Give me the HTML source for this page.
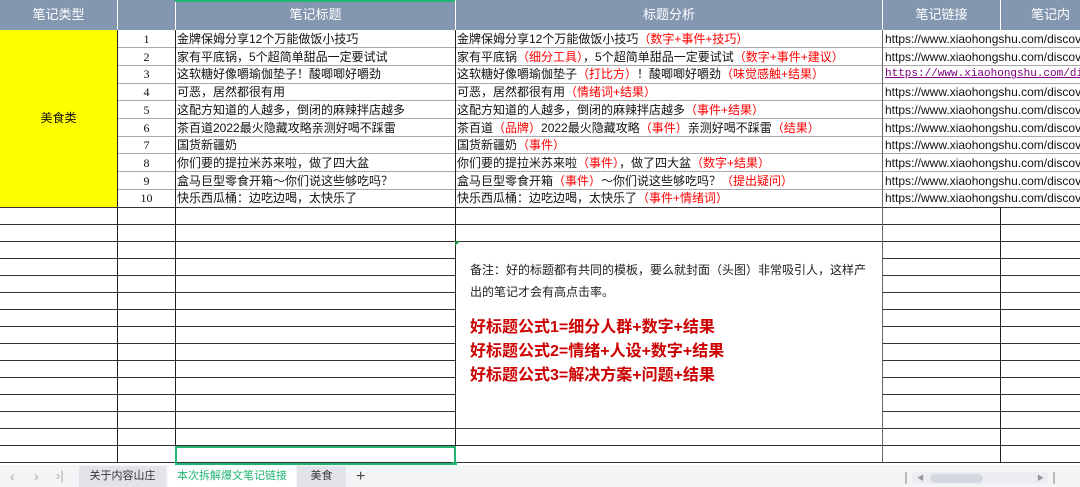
<!DOCTYPE html>
<html><head><meta charset="utf-8"><style>
*{margin:0;padding:0;box-sizing:border-box}
body{width:1080px;height:487px;overflow:hidden;background:#fff;font-family:"Liberation Sans","Noto Sans CJK SC",sans-serif;position:relative;font-size:12px;color:#111}
.a{position:absolute}
.h{position:absolute;background:#8497b0;color:#fff;font-size:13px;text-align:center;line-height:30px;top:0;height:30px}
.r{color:#f00}
.row{position:absolute;left:0;width:1080px;height:17.7px;line-height:18px;white-space:nowrap}
.row .n{position:absolute;left:118px;width:57px;text-align:center;font-family:"Liberation Serif",serif;font-size:12px}
.row .t{position:absolute;left:177px;width:277px;overflow:hidden}
.row .s{position:absolute;left:457px;width:424px;overflow:hidden}
.row .l{position:absolute;left:885px;width:195px;overflow:hidden;font-size:12px}
.hl{position:absolute;height:1px;background:#333}
.gl{position:absolute;left:117px;width:963px;height:1px;background:#aaa}
.v{position:absolute;top:30px;width:1px;height:433px;background:#222}
</style></head><body>
<div class="h" style="left:0;width:117px">笔记类型</div>
<div class="h" style="left:118px;width:57px"></div>
<div class="h" style="left:176px;width:279px">笔记标题</div>
<div class="h" style="left:456px;width:426px">标题分析</div>
<div class="h" style="left:883px;width:117px">笔记链接</div>
<div class="h" style="left:1001px;width:79px;text-align:left;padding-left:30px">笔记内容</div>
<div class="a" style="left:175px;top:0;width:280px;height:2px;background:#21b573"></div>

<div class="a" style="left:0;top:30px;width:117px;height:177px;background:#ffff00;text-align:center;line-height:177px">美食类</div>

<div class="gl" style="top:47px"></div>
<div class="gl" style="top:65px"></div>
<div class="gl" style="top:83px"></div>
<div class="gl" style="top:100px"></div>
<div class="gl" style="top:118px"></div>
<div class="gl" style="top:136px"></div>
<div class="gl" style="top:153px"></div>
<div class="gl" style="top:171px"></div>
<div class="gl" style="top:189px"></div>

<div class="hl" style="left:0;width:1080px;top:207px"></div>
<div class="hl" style="left:0;width:1080px;top:224px"></div>
<div class="hl" style="left:0;width:1080px;top:241px"></div>
<div class="hl" style="left:0;width:1080px;top:258px"></div>
<div class="hl" style="left:0;width:1080px;top:275px"></div>
<div class="hl" style="left:0;width:1080px;top:292px"></div>
<div class="hl" style="left:0;width:1080px;top:309px"></div>
<div class="hl" style="left:0;width:1080px;top:326px"></div>
<div class="hl" style="left:0;width:1080px;top:343px"></div>
<div class="hl" style="left:0;width:1080px;top:360px"></div>
<div class="hl" style="left:0;width:1080px;top:377px"></div>
<div class="hl" style="left:0;width:1080px;top:394px"></div>
<div class="hl" style="left:0;width:1080px;top:411px"></div>
<div class="hl" style="left:0;width:1080px;top:428px"></div>
<div class="hl" style="left:0;width:1080px;top:445px"></div>
<div class="hl" style="left:0;width:1080px;top:462px"></div>

<div class="row" style="top:30px"><span class="n">1</span><span class="t">金牌保姆分享12个万能做饭小技巧</span><span class="s">金牌保姆分享12个万能做饭小技巧<span class="r">（数字+事件+技巧）</span></span><span class="l">https://www.xiaohongshu.com/discov</span></div>
<div class="row" style="top:47.7px"><span class="n">2</span><span class="t">家有平底锅，5个超简单甜品一定要试试</span><span class="s">家有平底锅<span class="r">（细分工具）</span>，5个超简单甜品一定要试试<span class="r">（数字+事件+建议）</span></span><span class="l">https://www.xiaohongshu.com/discov</span></div>
<div class="row" style="top:65.4px"><span class="n">3</span><span class="t">这软糖好像嚼瑜伽垫子！酸唧唧好嚼劲</span><span class="s">这软糖好像嚼瑜伽垫子<span class="r">（打比方）</span>！酸唧唧好嚼劲<span class="r">（味觉感触+结果）</span></span><span class="l" style="font-family:'Liberation Mono',monospace;font-size:11px;color:#800080;text-decoration:underline">https://www.xiaohongshu.com/dis</span></div>
<div class="row" style="top:83.1px"><span class="n">4</span><span class="t">可恶，居然都很有用</span><span class="s">可恶，居然都很有用<span class="r">（情绪词+结果）</span></span><span class="l">https://www.xiaohongshu.com/discov</span></div>
<div class="row" style="top:100.8px"><span class="n">5</span><span class="t">这配方知道的人越多，倒闭的麻辣拌店越多</span><span class="s">这配方知道的人越多，倒闭的麻辣拌店越多<span class="r">（事件+结果）</span></span><span class="l">https://www.xiaohongshu.com/discov</span></div>
<div class="row" style="top:118.5px"><span class="n">6</span><span class="t">茶百道2022最火隐藏攻略亲测好喝不踩雷</span><span class="s">茶百道<span class="r">（品牌）</span>2022最火隐藏攻略<span class="r">（事件）</span>亲测好喝不踩雷<span class="r">（结果）</span></span><span class="l">https://www.xiaohongshu.com/discov</span></div>
<div class="row" style="top:136.2px"><span class="n">7</span><span class="t">国货新疆奶</span><span class="s">国货新疆奶<span class="r">（事件）</span></span><span class="l">https://www.xiaohongshu.com/discov</span></div>
<div class="row" style="top:153.9px"><span class="n">8</span><span class="t">你们要的提拉米苏来啦，做了四大盆</span><span class="s">你们要的提拉米苏来啦<span class="r">（事件）</span>，做了四大盆<span class="r">（数字+结果）</span></span><span class="l">https://www.xiaohongshu.com/discov</span></div>
<div class="row" style="top:171.6px"><span class="n">9</span><span class="t">盒马巨型零食开箱～你们说这些够吃吗？</span><span class="s">盒马巨型零食开箱<span class="r">（事件）</span>～你们说这些够吃吗？<span class="r">（提出疑问）</span></span><span class="l">https://www.xiaohongshu.com/discov</span></div>
<div class="row" style="top:189.3px"><span class="n">10</span><span class="t">快乐西瓜桶：边吃边喝，太快乐了</span><span class="s">快乐西瓜桶：边吃边喝，太快乐了<span class="r">（事件+情绪词）</span></span><span class="l">https://www.xiaohongshu.com/discov</span></div>

<div class="v" style="left:117px"></div>
<div class="v" style="left:175px"></div>
<div class="v" style="left:455px"></div>
<div class="v" style="left:882px;background:#666"></div>
<div class="v" style="left:1000px;top:207px;height:256px"></div>

<div class="a" style="left:456px;top:242px;width:426px;height:187px;background:#fff;border-bottom:1px solid #444">
 <div style="position:absolute;left:14px;top:17px;font-size:12px;line-height:22px;color:#222;width:402px">备注：好的标题都有共同的模板，要么就封面（头图）非常吸引人，这样产出的笔记才会有高点击率。</div>
 <div style="position:absolute;left:14px;top:74px;font-size:16px;font-weight:bold;color:#cc0000;line-height:24px">好标题公式1=细分人群+数字+结果<br>好标题公式2=情绪+人设+数字+结果<br>好标题公式3=解决方案+问题+结果</div>
</div>
<div class="a" style="left:455px;top:241px;width:0;height:0;border-top:5px solid #1a8c3a;border-right:5px solid transparent"></div>

<div class="a" style="left:175px;top:446px;width:281px;height:19px;border:2px solid #21b573"></div>
<div class="a" style="left:452px;top:462px;width:5px;height:5px;background:#21b573"></div>

<div class="a" style="left:0;top:465px;width:1080px;height:22px;background:#f3f4f6"></div>
<div class="a" style="left:10px;top:467px;color:#aaa;font-size:14px;line-height:18px">‹</div>
<div class="a" style="left:34px;top:467px;color:#aaa;font-size:14px;line-height:18px">›</div>
<div class="a" style="left:56px;top:467px;color:#aaa;font-size:13px;line-height:18px">›|</div>
<div class="a" style="left:79px;top:466px;width:87px;height:21px;background:#e2e4e9;font-size:11px;color:#333;text-align:center;line-height:21px">关于内容山庄</div>
<div class="a" style="left:168px;top:466px;width:128px;height:21px;background:#fff;font-size:11px;color:#21b573;text-align:center;line-height:21px">本次拆解爆文笔记链接</div>
<div class="a" style="left:297px;top:466px;width:49px;height:21px;background:#e2e4e9;font-size:11px;color:#333;text-align:center;line-height:21px">美食</div>
<div class="a" style="left:356px;top:466px;font-size:16px;color:#444;line-height:21px">+</div>
<div class="a" style="left:905px;top:472px;width:2px;height:12px;background:#bbb"></div>
<div class="a" style="left:912px;top:472px;width:136px;height:12px;background:#eceef2"></div>
<div class="a" style="left:930px;top:474px;width:53px;height:9px;border-radius:5px;background:#d5d8e0"></div>
<div class="a" style="left:917px;top:473px;font-size:7px;color:#999">◀</div>
<div class="a" style="left:1037px;top:473px;font-size:7px;color:#999">▶</div>
<div class="a" style="left:1053px;top:472px;width:2px;height:12px;background:#bbb"></div>
</body></html>
